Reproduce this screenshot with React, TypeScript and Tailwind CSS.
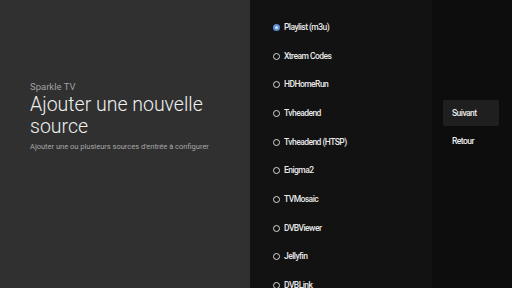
const SOURCES = [
  'Playlist (m3u)',
  'Xtream Codes',
  'HDHomeRun',
  'Tvheadend',
  'Tvheadend (HTSP)',
  'Enigma2',
  'TVMosaic',
  'DVBViewer',
  'Jellyfin',
  'DVBLink',
]

export default function App() {
  return (
    <div className="flex h-[288px] w-[512px] overflow-hidden font-['Roboto',sans-serif]">
      {/* Titre */}
      <div className="flex w-[250px] flex-col bg-[#303030] pl-[30px] pr-3 pt-[80px]">
        <div className="text-[9.5px] leading-[13px] text-[#a0a0a0]">Sparkle TV</div>
        <h1 className="mt-[1px] text-[19.5px] font-light leading-[22px] text-[#f0f0f0]">
          Ajouter une nouvelle source
        </h1>
        <p className="mt-[4px] text-[7.5px] leading-[10px] text-[#a8a8a8]">
          Ajouter une ou plusieurs sources d'entrée à configurer
        </p>
      </div>

      {/* Liste des sources */}
      <div className="flex w-[182px] flex-col bg-[#121212] pt-[13px] pl-[23px]">
        {SOURCES.map((s, i) => (
          <div key={s} className="flex h-[28.7px] shrink-0 items-center gap-[4px]">
            {i === 0 ? (
              <span className="flex h-[7px] w-[7px] items-center justify-center rounded-full bg-[#5b8fd6]">
                <span className="h-[3px] w-[3px] rounded-full bg-[#cfe0f5]" />
              </span>
            ) : (
              <span className="h-[7px] w-[7px] rounded-full border border-[#d8d8d8]" />
            )}
            <span className="text-[8.5px] font-medium tracking-[-0.55px] text-[#e8e8e8]">{s}</span>
          </div>
        ))}
      </div>

      {/* Actions */}
      <div className="flex flex-1 flex-col bg-[#0d0d0d] pt-[100px] pl-[11px] pr-[13px]">
        <div className="flex h-[26px] items-center rounded-[2px] bg-[#1f1f1f] pl-[9px] text-[8.5px] font-medium tracking-[-0.55px] text-[#ececec]">
          Suivant
        </div>
        <div className="mt-[2px] flex h-[26px] items-center pl-[9px] text-[8.5px] font-medium tracking-[-0.55px] text-[#ececec]">
          Retour
        </div>
      </div>
    </div>
  )
}
